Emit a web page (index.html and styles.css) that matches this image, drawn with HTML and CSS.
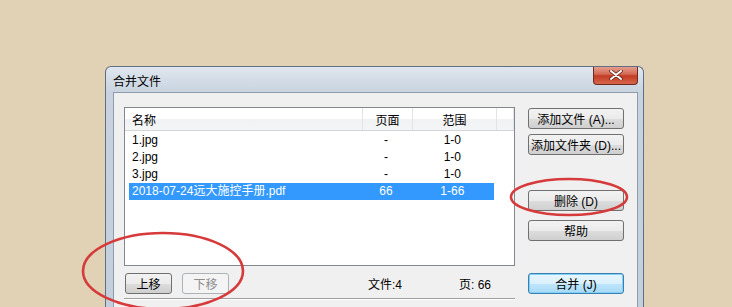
FILE: index.html
```html
<!DOCTYPE html>
<html lang="zh-CN">

<head>
    <meta charset="UTF-8">
    <title>合并文件</title>
    <link rel="stylesheet" href="styles.css">
</head>

<body>
    <div class="window">
        <!-- title bar -->
        <div class="titlebar">
            <span class="title">合并文件</span>
            <span class="close">
                <svg width="14" height="10" viewBox="0 0 14 10">
                    <path d="M2 1 L12 9 M12 1 L2 9" stroke="#5a1e14" stroke-width="3.4" stroke-linecap="round"/>
                    <path d="M2 1 L12 9 M12 1 L2 9" stroke="#fff" stroke-width="2" stroke-linecap="round"/>
                </svg>
            </span>
        </div>

        <div class="client">
            <div class="left-col">
                <!-- file list -->
                <div class="listbox">
                    <div class="list-head">
                        <span class="col-name">名称</span>
                        <span class="col-page">页面</span>
                        <span class="col-range">范围</span>
                        <span class="col-rest"></span>
                    </div>
                    <div class="row">
                        <span class="col-name">1.jpg</span>
                        <span class="col-page">-</span>
                        <span class="col-range">1-0</span>
                    </div>
                    <div class="row">
                        <span class="col-name">2.jpg</span>
                        <span class="col-page">-</span>
                        <span class="col-range">1-0</span>
                    </div>
                    <div class="row">
                        <span class="col-name">3.jpg</span>
                        <span class="col-page">-</span>
                        <span class="col-range">1-0</span>
                    </div>
                    <div class="row selected">
                        <span class="col-name">2018-07-24远大施控手册.pdf</span>
                        <span class="col-page">66</span>
                        <span class="col-range">1-66</span>
                    </div>
                </div>

                <!-- move buttons and totals -->
                <div class="bottom-row">
                    <button class="btn small">上移</button>
                    <button class="btn small" disabled>下移</button>
                    <span class="count">文件:4</span>
                    <span class="pages">页: 66</span>
                </div>
                <div class="separator"></div>
            </div>

            <div class="right-col">
                <button class="btn">添加文件 (A)...</button>
                <button class="btn">添加文件夹 (D)...</button>
                <button class="btn delete">删除 (D)</button>
                <button class="btn">帮助</button>
                <button class="btn default merge">合并 (J)</button>
            </div>
        </div>
    </div>

    <!-- red marks drawn over the screenshot -->
    <svg class="marks" width="732" height="307">
        <ellipse cx="569" cy="197" rx="58" ry="18" fill="none" stroke="#d63a3a" stroke-width="2.6"/>
        <ellipse cx="163" cy="271" rx="80" ry="38" fill="none" stroke="#d63a3a" stroke-width="2.6"/>
    </svg>
</body>

</html>
```

FILE: styles.css
```css
* {
    box-sizing: border-box;
    margin: 0;
    padding: 0;
}

body {
    background-color: #e1d2b6;
    font-family: 'Liberation Sans', 'Noto Sans CJK SC', sans-serif;
    font-size: 12px;
    color: #000;
    height: 307px;
    overflow: hidden;
    position: relative;
}

.window {
    margin: 66px 0 0 105px;
    width: 539px;
    height: 241px;
    overflow: hidden;
    border: 1px solid #5f6e80;
    border-bottom: none;
    border-radius: 6px 6px 0 0;
    background: linear-gradient(to bottom, #dfe6ee 0, #c8d3df 26px, #c3cfdc 100%);
    padding: 0 5px 0 7px;
}

.titlebar {
    display: flex;
    justify-content: space-between;
    align-items: flex-start;
    height: 25px;
}

.title {
    padding-top: 5px;
    font-size: 12px;
    color: #000;
}

.close {
    display: flex;
    align-items: center;
    justify-content: center;
    width: 45px;
    height: 19px;
    margin-top: -1px;
    border: 1px solid #6d2a20;
    border-top: none;
    border-radius: 0 0 4px 4px;
    background: linear-gradient(to bottom, #e7a594 0, #d46a55 45%, #c13b24 55%, #d8674a 100%);
}

.client {
    display: flex;
    height: 240px;
    background-color: #f0f0f0;
    border: 1px solid #8e9cac;
    padding: 14px 0 0 10px;
}

.left-col {
    width: 391px;
    display: flex;
    flex-direction: column;
}

.listbox {
    height: 159px;
    background: #fff;
    border: 1px solid #828790;
}

.list-head {
    display: flex;
    height: 23px;
    align-items: center;
    background: linear-gradient(to bottom, #fff 0, #fff 50%, #f1f2f4 51%, #f4f5f7 100%);
    border-bottom: 1px solid #d5d5d5;
}

.list-head span {
    height: 100%;
    display: flex;
    align-items: center;
    border-right: 1px solid #e3e4e6;
}

.list-head .col-name {
    padding-left: 7px;
    width: 238px;
}

.list-head .col-page,
.list-head .col-range {
    justify-content: center;
}

.col-name {
    width: 234px;
}

.col-page {
    width: 50px;
    text-align: center;
}

.col-range {
    width: 84px;
    text-align: center;
}

.col-rest {
    flex: 1;
}

.row {
    display: flex;
    height: 17px;
    line-height: 17px;
    margin-left: 4px;
    width: 365px;
}

.row .col-name {
    padding-left: 3px;
}

.list-head + .row {
    margin-top: 1px;
}

.row.selected {
    background-color: #3399ff;
    color: #fff;
}

.bottom-row {
    display: flex;
    align-items: center;
    margin-top: 7px;
    height: 20px;
}

.btn {
    font-family: 'Liberation Sans', 'Noto Sans CJK SC', sans-serif;
    font-size: 12px;
    width: 96px;
    height: 21px;
    border: 1px solid #707070;
    border-radius: 3px;
    background: linear-gradient(to bottom, #f2f2f2 0, #ebebeb 50%, #dddddd 51%, #cfcfcf 100%);
    color: #000;
}

.btn.small {
    width: 47px;
    margin-left: 1px;
    margin-right: 9px;
}

.btn:disabled {
    border-color: #adb2b5;
    background: #f4f4f4;
    color: #8d8d8d;
}

.count {
    margin-left: 130px;
}

.pages {
    margin-left: 57px;
}

.separator {
    margin-top: 5px;
    height: 2px;
    border-top: 1px solid #a0a0a0;
    border-bottom: 1px solid #fff;
}

.right-col {
    display: flex;
    flex-direction: column;
    margin-left: 13px;
    padding-top: 1px;
}

.right-col .btn + .btn {
    margin-top: 5px;
}

.right-col .btn.delete {
    margin-top: 35px;
}

.right-col .btn.delete + .btn {
    margin-top: 9px;
}

.right-col .btn.merge {
    margin-top: 32px;
}

.btn.default {
    border-color: #3c7fb1;
    background: linear-gradient(to bottom, #eaf6fd 0, #d9f0fc 50%, #bee6fd 51%, #a7d9f5 100%);
    box-shadow: inset 0 0 0 1px #7fd1f7;
}

.marks {
    position: absolute;
    left: 0;
    top: 0;
    pointer-events: none;
}
```
